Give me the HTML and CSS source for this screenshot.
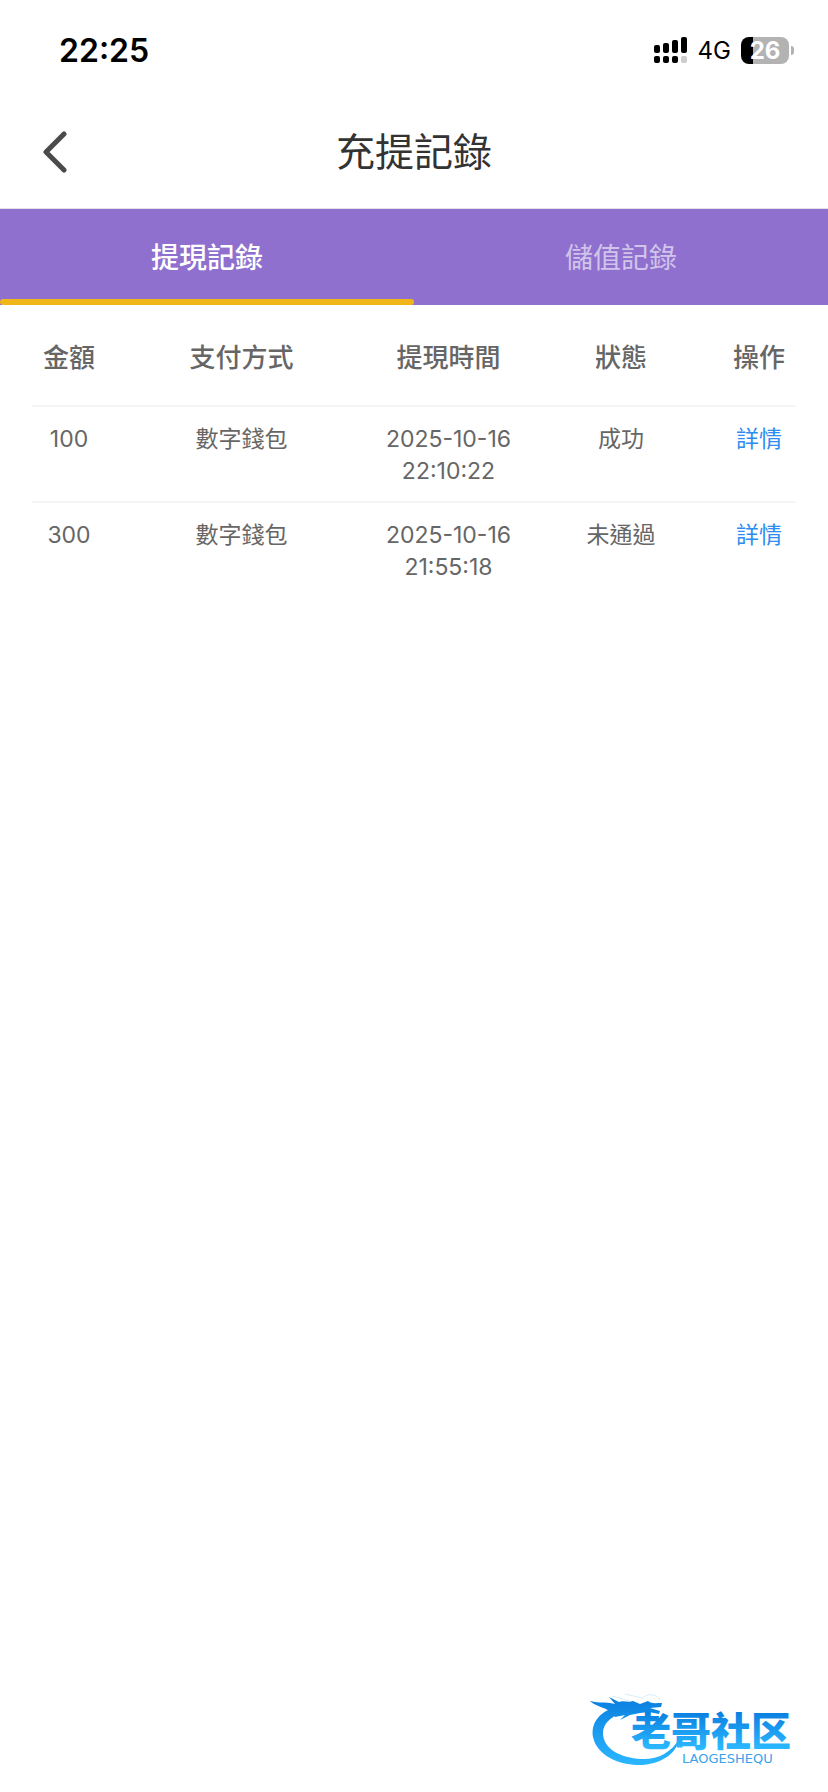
FILE: index.html
```
<!DOCTYPE html>
<html lang="zh-Hant">
<head>
    <meta charset="UTF-8">
    <meta name="viewport" content="width=device-width, initial-scale=1.0">
    <title>充提記錄</title>
    <link rel="stylesheet" href="styles.css">
</head>
<body>
    <div class="status-bar">
        <span class="time">22:25</span>
        <div class="status-icons">
            <svg class="signal" width="34" height="28" viewBox="0 0 34 28" aria-hidden="true">
                <rect x="0" y="9" width="6" height="8" rx="2"/>
                <rect x="9" y="7" width="6" height="10" rx="2"/>
                <rect x="18" y="4" width="6" height="13" rx="2"/>
                <rect x="27" y="1" width="6" height="16" rx="2"/>
                <rect x="0" y="20" width="6" height="7" rx="2"/>
                <rect x="9" y="20" width="6" height="7" rx="2"/>
                <rect x="18" y="20" width="6" height="7" rx="2"/>
                <rect x="27" y="20" width="6" height="7" rx="2" fill="#ccc"/>
            </svg>
            <span class="network">4G</span>
            <div class="battery">
                <span class="battery-level">26</span>
                <span class="battery-tip"></span>
            </div>
        </div>
    </div>

    <header class="header">
        <button class="back" type="button" aria-label="返回">
            <svg width="26" height="42" viewBox="0 0 26 42">
                <path d="M22 3 L4 21 L22 39" fill="none" stroke="#4a4a4a" stroke-width="5" stroke-linecap="round" stroke-linejoin="round"/>
            </svg>
        </button>
        <h1>充提記錄</h1>
    </header>

    <nav class="tabs">
        <button class="tab active" type="button">提現記錄</button>
        <button class="tab" type="button">儲值記錄</button>
    </nav>

    <table class="records">
        <colgroup>
            <col class="col-small">
            <col class="col-large">
            <col class="col-large">
            <col class="col-small">
            <col class="col-small">
        </colgroup>
        <thead>
            <tr>
                <th>金額</th>
                <th>支付方式</th>
                <th>提現時間</th>
                <th>狀態</th>
                <th>操作</th>
            </tr>
        </thead>
        <tbody>
            <tr>
                <td>100</td>
                <td>數字錢包</td>
                <td>2025-10-16<br>22:10:22</td>
                <td>成功</td>
                <td><a href="#">詳情</a></td>
            </tr>
            <tr>
                <td>300</td>
                <td>數字錢包</td>
                <td>2025-10-16<br>21:55:18</td>
                <td>未通過</td>
                <td><a href="#">詳情</a></td>
            </tr>
        </tbody>
    </table>

    <footer class="footer">
        <svg class="logo" width="226" height="80" viewBox="0 0 226 80">
            <defs>
                <linearGradient id="ring" x1="0" y1="8" x2="0" y2="76" gradientUnits="userSpaceOnUse">
                    <stop offset="0" stop-color="#0a7fe0"/>
                    <stop offset="1" stop-color="#2bb8ff"/>
                </linearGradient>
                <linearGradient id="word" x1="0" y1="22" x2="0" y2="58" gradientUnits="userSpaceOnUse">
                    <stop offset="0" stop-color="#0a7fe0"/>
                    <stop offset="1" stop-color="#2bb8ff"/>
                </linearGradient>
            </defs>
            <!-- dragon head -->
            <path fill="url(#ring)" d="M0 11 C7 13 13 12 20 13 L25 14 L19 7 L29 12 C34 10 38 13 43 11 L50 14 L58 11 C61 14 66 13 72 13 L71 17 L60 18 L70 21 L69 24 L59 22 L50 23 L40 25 L30 30 L35 25 L25 27 C20 17 7 18 0 11 Z"/>
            <path fill="none" stroke="#d9edfb" stroke-width="1" d="M22 6 L40 11 M35 4 L52 8 C60 2 68 5 70 11"/>
            <!-- dragon body -->
            <path fill="url(#ring)" d="M27 17 C7 22 1 35 3 47 C7 66 30 76 53 75 C74 73 87 62 89 49 C81 63 67 70 51 69 C31 68 13 59 13 43 C13 34 20 27 32 23 Z"/>
            <text class="logo-name" x="41" y="56" fill="url(#word)">老哥社区</text>
            <text class="logo-latin" x="92" y="73" fill="#3aa3ec">LAOGESHEQU</text>
        </svg>
    </footer>
</body>
</html>
```
FILE: styles.css
```
* {
    box-sizing: border-box;
}
body {
    margin: 0;
    min-height: 100vh;
    display: flex;
    flex-direction: column;
    background: #fff;
    color: #666;
    font-family: Inter, "Noto Sans CJK TC", sans-serif;
}
button {
    border: none;
    padding: 0;
    background: none;
    font-family: inherit;
    cursor: pointer;
}
.status-bar {
    height: 100px;
    padding: 0 34px 0 59px;
    display: flex;
    align-items: center;
    justify-content: space-between;
    color: #000;
}
.time {
    font-size: 32px;
    font-weight: 600;
}
.status-icons {
    display: flex;
    align-items: center;
    gap: 10px;
}
.network {
    font-size: 24px;
}
.battery {
    display: flex;
    align-items: center;
    gap: 2px;
}
.battery-level {
    width: 48px;
    height: 27px;
    border-radius: 8px;
    background: linear-gradient(to right, #000 25%, #b3b3b3 25%);
    color: #fff;
    font-size: 24px;
    font-weight: 700;
    line-height: 27px;
    text-align: center;
}
.battery-tip {
    width: 3px;
    height: 9px;
    border-radius: 0 4px 4px 0;
    background: #b3b3b3;
}
.header {
    height: 109px;
    padding: 0 42px 4px;
    display: grid;
    grid-template-columns: 1fr auto 1fr;
    align-items: center;
    border-bottom: 1px solid #e0e0e0;
}
.back {
    width: 26px;
    height: 42px;
}
.back svg {
    display: block;
}
.header h1 {
    margin: 0;
    color: #333;
    font-size: 39px;
    font-weight: 400;
    line-height: 56px;
}
.tabs {
    display: flex;
    background: #9070ce;
}
.tab {
    flex: 1;
    height: 96px;
    padding-bottom: 2px;
    color: rgba(255, 255, 255, 0.6);
    font-size: 28px;
    font-weight: 400;
    position: relative;
}
.tab.active {
    color: #fff;
    font-weight: 500;
}
.tab.active::after {
    content: "";
    position: absolute;
    left: 0;
    right: 0;
    bottom: 0;
    height: 6px;
    border-radius: 3px;
    background: #f0b619;
}
.records {
    width: 100%;
    table-layout: fixed;
    border-collapse: collapse;
    text-align: center;
}
.col-small {
    width: 16.6667%;
}
.col-large {
    width: 25%;
}
.records th {
    height: 100px;
    padding: 0;
    font-size: 26px;
    font-weight: 500;
}
.records td {
    padding: 18px 0 14px;
    font-size: 23px;
    line-height: 32px;
    vertical-align: top;
}
/* row divider, inset from both edges */
.records tbody tr {
    background: linear-gradient(#f5f5f5, #f5f5f5) center top / calc(100% - 64px) 2px no-repeat;
}
.records a {
    color: #2d8cf0;
    text-decoration: none;
}
.footer {
    margin-top: auto;
    padding: 0 12px 22px;
    display: flex;
    justify-content: flex-end;
}
.logo-name {
    font-family: "Noto Sans CJK SC", sans-serif;
    font-size: 40px;
    font-weight: 900;
}
.logo-latin {
    font-family: "DejaVu Sans", sans-serif;
    font-size: 13px;
}
```
